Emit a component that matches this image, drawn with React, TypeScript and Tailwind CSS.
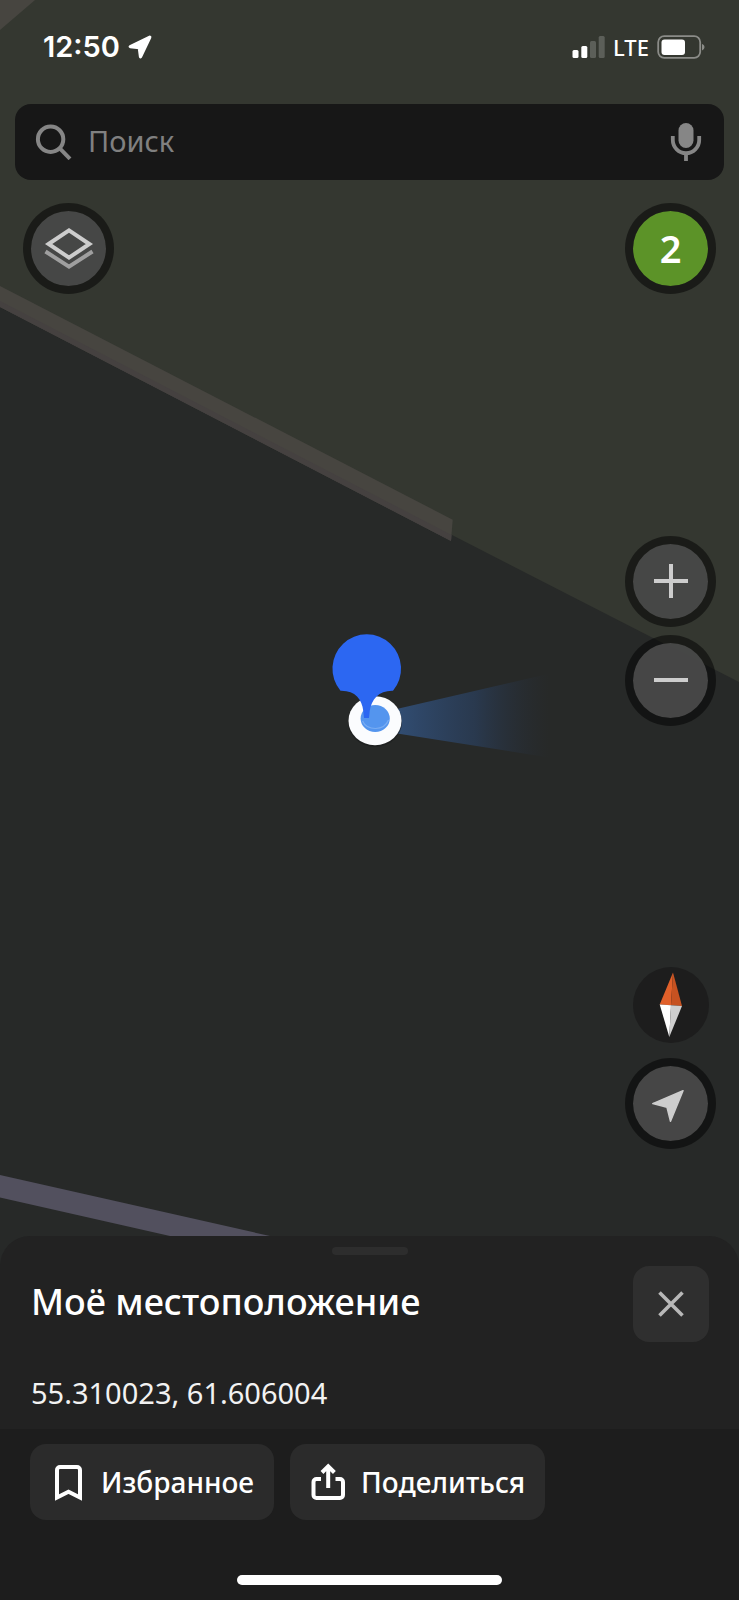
import type { ReactNode } from 'react'

function RoundButton({ label, children }: { label: string; children: ReactNode }) {
  return (
    <button
      type="button"
      aria-label={label}
      className="flex size-[91px] items-center justify-center rounded-full border-8 border-black/50 bg-[#484848]/95 bg-clip-padding"
    >
      {children}
    </button>
  )
}

function ActionButton({ icon, children }: { icon: ReactNode; children: ReactNode }) {
  return (
    <button type="button" className="flex h-[76px] items-center gap-[15px] rounded-2xl bg-[#2b2b2b] px-5 text-[28px] font-medium text-white">
      {icon}
      <span>{children}</span>
    </button>
  )
}

function MapCanvas() {
  return (
    <svg viewBox="0 0 739 1600" preserveAspectRatio="xMidYMid slice" className="absolute inset-0 size-full" aria-hidden="true">
      <defs>
        <linearGradient id="beam" x1="400" x2="550" y1="0" y2="0" gradientUnits="userSpaceOnUse">
          <stop offset="0" stopColor="#325079" stopOpacity="0.9" />
          <stop offset="0.5" stopColor="#2b4263" stopOpacity="0.65" />
          <stop offset="1" stopColor="#27303f" stopOpacity="0" />
        </linearGradient>
      </defs>
      <rect width="739" height="1600" fill="#272928" />
      <path d="M0 0H739V682L452 535L0 303Z" fill="#343730" />
      <path d="M0 0H35L0 30Z" fill="#474540" />
      <path d="M0 286L452.700 519.700L451 541L0 307Z" fill="#474540" />
      <path d="M0 301L451.500 535L451 541L0 307Z" fill="#454140" />
      <path d="M0 1175L270 1236L330 1250H230L170 1236L0 1197.500Z" fill="#52505e" />

      {/* position and heading */}
      <path d="M375 714L552 673V758L375 730Z" fill="url(#beam)" />
      <ellipse cx="375" cy="722" rx="27" ry="25" fill="#1b1d1d" opacity="0.6" />
      <ellipse cx="375" cy="720.700" rx="26.500" ry="24.500" fill="#fbfcfe" />
      <ellipse cx="375.200" cy="718.500" rx="14.600" ry="13.500" fill="#5495ee" />
      <path d="M362.500 721Q366 728.500 375.500 728.500T388.500 720" fill="none" stroke="#79adf3" strokeWidth="1.200" />
      <path
        d="M340.500 690.700A34.300 34.300 0 1 1 393 690.700C379 690.300 371.500 699 369.700 711L369 718H364L363.300 711C362 699 355 690.300 340.500 690.700Z"
        fill="#2c67f2"
      />
    </svg>
  )
}

export default function App() {
  return (
    <main className="relative flex min-h-screen flex-col overflow-hidden bg-[#272928] font-['Noto_Sans',sans-serif]">
      <MapCanvas />

      <div className="relative flex flex-1 flex-col">
        <header>
          <div className="flex h-[94px] items-center justify-between pr-[34px] pl-[43px] text-white">
            <div className="flex items-center gap-2">
              <time className="font-['Inter',sans-serif] text-[29px] font-semibold">12:50</time>
              <svg width="24" height="24" viewBox="0 0 24 24" fill="white" stroke="white" strokeWidth="3.200" strokeLinejoin="round" aria-hidden="true">
                <path d="M21.800 2.200L2.200 11.600L11.300 12.700L12.500 21.800Z" />
              </svg>
            </div>
            <div className="flex items-center gap-2">
              <svg width="33" height="24" viewBox="0 0 33 24" fill="white" aria-hidden="true">
                <rect x="0.500" y="15" width="6" height="8" rx="1.500" />
                <rect x="9.300" y="11" width="6" height="12" rx="1.500" />
                <rect x="18" y="6" width="6" height="17" rx="1.500" opacity="0.2" />
                <rect x="26.700" y="1" width="6" height="22" rx="1.500" opacity="0.2" />
              </svg>
              <span className="text-[22px] font-medium">LTE</span>
              <svg width="48" height="24" viewBox="0 0 48 24" aria-hidden="true">
                <rect x="1.200" y="1.200" width="42" height="21.600" rx="6" fill="none" stroke="#8b8c88" strokeWidth="1.800" />
                <rect x="4.500" y="4.500" width="23.500" height="15.500" rx="3" fill="white" />
                <path d="M45 9C48.300 10 48.300 14 45 15.500Z" fill="#8b8c88" />
              </svg>
            </div>
          </div>

          <div className="mx-[15px] mt-2.5 flex h-[76px] items-center gap-4 rounded-2xl bg-[#171717] pr-[22px] pl-5 text-[#868686]">
            <svg width="37" height="36" viewBox="0 0 37 36" fill="none" stroke="currentColor" strokeWidth="4" aria-hidden="true">
              <circle cx="15.600" cy="15.200" r="12.700" />
              <path d="M24.800 24.400L35 34.800" />
            </svg>
            <input
              type="search"
              aria-label="Поиск"
              placeholder="Поиск"
              className="min-w-0 flex-1 bg-transparent pb-0.5 text-[29px] text-white outline-none placeholder:text-[#808080]"
            />
            <button type="button" aria-label="Голосовой ввод">
              <svg width="32" height="40" viewBox="0 0 32 40" fill="none" aria-hidden="true">
                <rect x="8.500" y="1" width="15" height="25" rx="7.500" fill="currentColor" />
                <path d="M2.800 14V18A13.200 13.200 0 0 0 29.200 18V14M16 31V39" stroke="currentColor" strokeWidth="3.800" />
              </svg>
            </button>
          </div>
        </header>

        <div className="flex flex-1 justify-between px-[23px] pt-[23px] pb-[87px]">
          <RoundButton label="Слои">
            <svg width="50" height="44" viewBox="0 0 50 44" fill="none" strokeWidth="4" aria-hidden="true">
              <path d="M1.500 24.500L25 39.700L48.500 24.500" stroke="#9f9f9f" />
              <path d="M4.600 17L25 3.400L45.400 17L25 30.600Z" stroke="#cdcdcd" />
            </svg>
          </RoundButton>

          <div className="flex flex-col items-center justify-between gap-4">
            <button
              type="button"
              aria-label="Пробки: 2 балла"
              className="flex size-[91px] items-center justify-center rounded-full border-8 border-black/50 bg-[#5c9328] bg-clip-padding text-[38px] font-semibold text-white"
            >
              2
            </button>

            <div className="flex flex-col gap-2">
              <RoundButton label="Приблизить">
                <svg width="36" height="36" viewBox="0 0 36 36" stroke="#cdcdcd" strokeWidth="4" aria-hidden="true">
                  <path d="M1 18H35M18 1V35" />
                </svg>
              </RoundButton>
              <RoundButton label="Отдалить">
                <svg width="36" height="36" viewBox="0 0 36 36" stroke="#cdcdcd" strokeWidth="4" aria-hidden="true">
                  <path d="M1 18H35" />
                </svg>
              </RoundButton>
            </div>

            <div className="flex flex-col items-center gap-[15px]">
              <button type="button" aria-label="Компас" className="flex size-[76px] items-center justify-center rounded-full bg-[#1d1d1d]">
                <svg width="24" height="66" viewBox="0 0 24 66" aria-hidden="true">
                  <path d="M14 0.500L0.700 32.500L12 33.300Z" fill="#e1602a" />
                  <path d="M14 0.500L23 34L12 33.300Z" fill="#c65221" />
                  <path d="M0.700 32.500L12 33.300L10.300 65Z" fill="#ffffff" />
                  <path d="M23 34L12 33.300L10.300 65Z" fill="#cfcfcf" />
                </svg>
              </button>
              <RoundButton label="Моё местоположение">
                <svg width="38" height="38" viewBox="0 0 38 38" fill="#cdcdcd" stroke="#cdcdcd" strokeWidth="1.500" strokeLinejoin="round" aria-hidden="true">
                  <path d="M31 5.800L0.800 18.600L15 22.300L18.500 36.300Z" />
                </svg>
              </RoundButton>
            </div>
          </div>
        </div>
      </div>

      <section className="relative overflow-hidden rounded-t-[30px] bg-[#222222] text-white">
        <div className="pt-[11px] pr-[30px] pb-[18px] pl-[31px]">
          <div className="mx-auto h-2 w-[76px] rounded-full bg-[#2d2d2d]" />
          <div className="mt-[11px] flex items-center justify-between gap-4">
            <h1 className="pb-1 text-[36px] leading-[44px] font-medium">Моё местоположение</h1>
            <button type="button" aria-label="Закрыть" className="flex size-[76px] shrink-0 items-center justify-center rounded-2xl bg-[#2f2f2f]">
              <svg width="26" height="26" viewBox="0 0 26 26" stroke="#b8b8b8" strokeWidth="3.600" aria-hidden="true">
                <path d="M1.500 1.500L24.500 24.500M24.500 1.500L1.500 24.500" />
              </svg>
            </button>
          </div>
          <p className="mt-[33px] text-[29px] leading-9 text-[#f2f2f2]">55.310023, 61.606004</p>
        </div>

        <div className="bg-[#1d1d1d] px-[30px] pt-[15px] pb-[15px]">
          <div className="flex flex-wrap gap-4">
            <ActionButton
              icon={
                <svg width="36" height="40" viewBox="0 0 36 40" fill="none" stroke="currentColor" strokeWidth="4" aria-hidden="true">
                  <path d="M7 35.500V8A3 3 0 0 1 10 5H27A3 3 0 0 1 30 8V35.500L18.500 29.800Z" />
                </svg>
              }
            >
              Избранное
            </ActionButton>
            <ActionButton
              icon={
                <svg width="36" height="40" viewBox="0 0 36 40" fill="none" stroke="currentColor" strokeWidth="4" aria-hidden="true">
                  <path d="M11 17H6.500A3 3 0 0 0 3.500 20V33A3 3 0 0 0 6.500 36H30A3 3 0 0 0 33 33V20A3 3 0 0 0 30 17H25.500" />
                  <path d="M18.200 26V4.500M12 10.500L18.200 4.300L24.400 10.500" />
                </svg>
              }
            >
              Поделиться
            </ActionButton>
          </div>
          <div className="mx-auto mt-[55px] h-2.5 w-[39%] rounded-full bg-white" />
        </div>
      </section>
    </main>
  )
}
